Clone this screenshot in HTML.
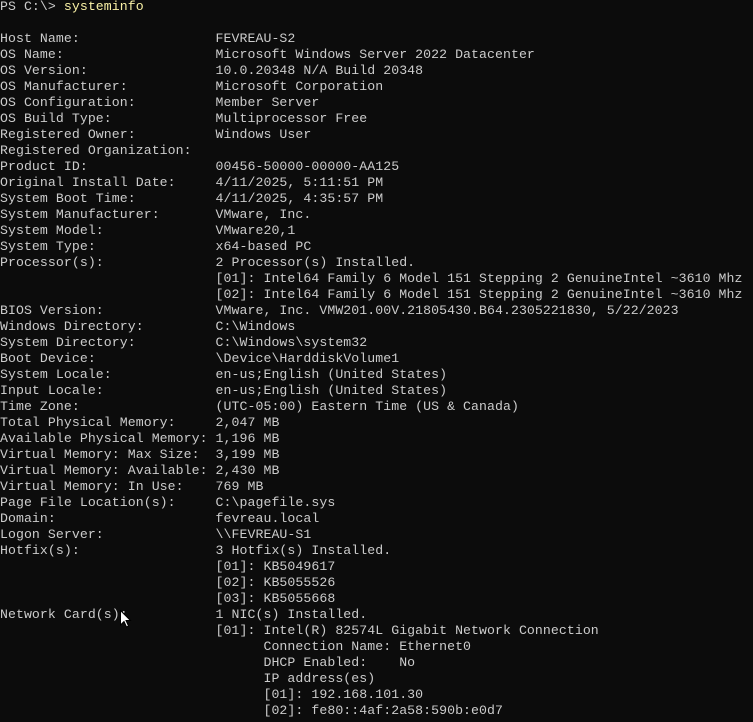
<!DOCTYPE html>
<html><head><style>
html,body{margin:0;padding:0;background:#0c0c0c;width:753px;height:722px;overflow:hidden}
pre{position:absolute;left:0;top:-1px;margin:0;font-family:"Liberation Mono",monospace;font-size:13.2px;letter-spacing:0.07px;line-height:16px;color:#cccccc;white-space:pre}
.y{color:#f9f1a5}
</style></head><body>
<pre>PS C:\&gt; <span class="y">systeminfo</span>

Host Name:                 FEVREAU-S2
OS Name:                   Microsoft Windows Server 2022 Datacenter
OS Version:                10.0.20348 N/A Build 20348
OS Manufacturer:           Microsoft Corporation
OS Configuration:          Member Server
OS Build Type:             Multiprocessor Free
Registered Owner:          Windows User
Registered Organization:
Product ID:                00456-50000-00000-AA125
Original Install Date:     4/11/2025, 5:11:51 PM
System Boot Time:          4/11/2025, 4:35:57 PM
System Manufacturer:       VMware, Inc.
System Model:              VMware20,1
System Type:               x64-based PC
Processor(s):              2 Processor(s) Installed.
                           [01]: Intel64 Family 6 Model 151 Stepping 2 GenuineIntel ~3610 Mhz
                           [02]: Intel64 Family 6 Model 151 Stepping 2 GenuineIntel ~3610 Mhz
BIOS Version:              VMware, Inc. VMW201.00V.21805430.B64.2305221830, 5/22/2023
Windows Directory:         C:\Windows
System Directory:          C:\Windows\system32
Boot Device:               \Device\HarddiskVolume1
System Locale:             en-us;English (United States)
Input Locale:              en-us;English (United States)
Time Zone:                 (UTC-05:00) Eastern Time (US &amp; Canada)
Total Physical Memory:     2,047 MB
Available Physical Memory: 1,196 MB
Virtual Memory: Max Size:  3,199 MB
Virtual Memory: Available: 2,430 MB
Virtual Memory: In Use:    769 MB
Page File Location(s):     C:\pagefile.sys
Domain:                    fevreau.local
Logon Server:              \\FEVREAU-S1
Hotfix(s):                 3 Hotfix(s) Installed.
                           [01]: KB5049617
                           [02]: KB5055526
                           [03]: KB5055668
Network Card(s):           1 NIC(s) Installed.
                           [01]: Intel(R) 82574L Gigabit Network Connection
                                 Connection Name: Ethernet0
                                 DHCP Enabled:    No
                                 IP address(es)
                                 [01]: 192.168.101.30
                                 [02]: fe80::4af:2a58:590b:e0d7</pre>
<svg style="position:absolute;left:120px;top:610px" width="12" height="20" viewBox="0 0 12 20"><path d="M0.5 0.5 L0.5 15 L4 11.5 L6.5 17 L8.5 16 L6 10.5 L10.5 10.5 Z" fill="#fff" stroke="#000" stroke-width="1"/></svg>
</body></html>
